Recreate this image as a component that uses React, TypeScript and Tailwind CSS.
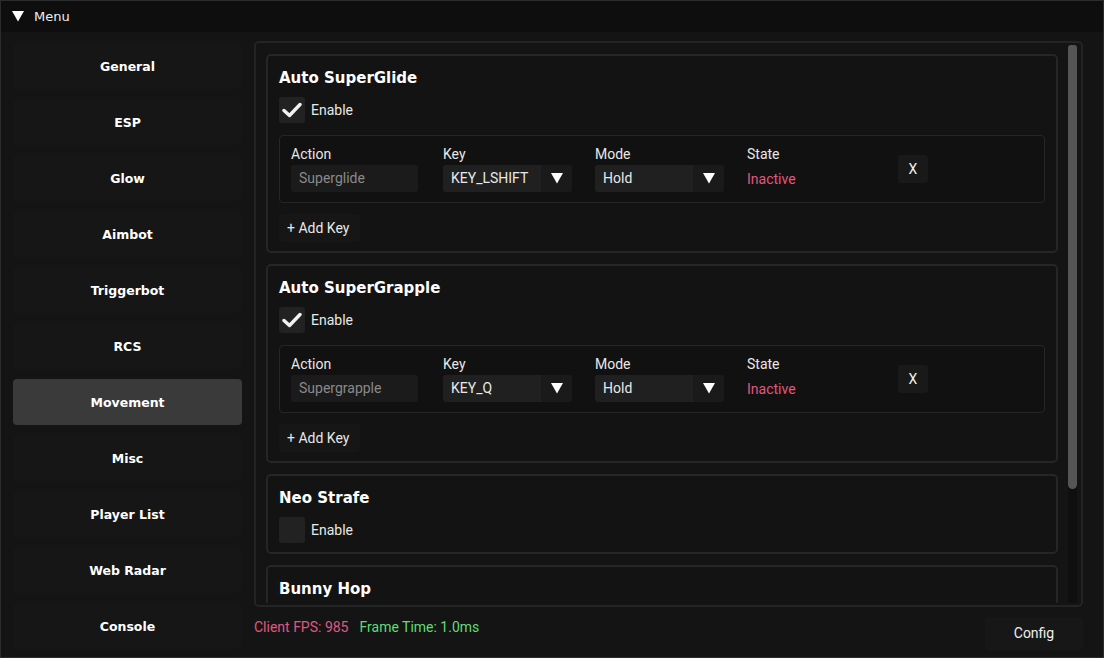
import React from 'react';

const nav = ['General', 'ESP', 'Glow', 'Aimbot', 'Triggerbot', 'RCS', 'Movement', 'Misc', 'Player List', 'Web Radar', 'Console'];

const Tri = ({ className = '' }: { className?: string }) => (
  <svg width="12" height="11" viewBox="0 0 12 11" className={className}>
    <polygon points="0,0 12,0 6,10.5" fill="#fff" />
  </svg>
);

const Check = () => (
  <svg width="20" height="16" viewBox="0 0 20 16">
    <path d="M2 8.5 L7.5 13.5 L18 2.5" stroke="#f2f2f2" strokeWidth="3.4" fill="none" strokeLinecap="round" strokeLinejoin="round" />
  </svg>
);

const Checkbox = ({ checked }: { checked: boolean }) => (
  <div className="flex items-center gap-[6px] h-[26px]">
    <div className="w-[26px] h-[26px] rounded-[3px] bg-[#222222] flex items-center justify-center">
      {checked && <Check />}
    </div>
    <span className="text-[14px] text-[#e8e8e8]">Enable</span>
  </div>
);

const Select = ({ value, width }: { value: string; width: number }) => (
  <div className="flex h-[27px]">
    <div className="bg-[#202020] rounded-l-[3px] flex items-center pl-[8px] text-[14px] text-[#e8e8e8]" style={{ width }}>{value}</div>
    <div className="w-[31px] bg-[#1a1a1a] rounded-r-[3px] flex items-center justify-center"><Tri /></div>
  </div>
);

const KeyRow = ({ action, keyName }: { action: string; keyName: string }) => (
  <div className="border border-[#262626] bg-[#111111] rounded-[4px] h-[68px] pl-[11px] flex items-center">
    <div className="w-[152px] flex flex-col gap-[3px]">
      <span className="text-[14px] leading-[16px] text-[#e8e8e8]">Action</span>
      <div className="w-[127px] h-[27px] bg-[#1b1b1b] rounded-[3px] flex items-center pl-[8px] text-[14px] text-[#8a8a8a]">{action}</div>
    </div>
    <div className="w-[152px] flex flex-col gap-[3px]">
      <span className="text-[14px] leading-[16px] text-[#e8e8e8]">Key</span>
      <Select value={keyName} width={98} />
    </div>
    <div className="w-[152px] flex flex-col gap-[3px]">
      <span className="text-[14px] leading-[16px] text-[#e8e8e8]">Mode</span>
      <Select value="Hold" width={98} />
    </div>
    <div className="w-[151px] flex flex-col gap-[3px]">
      <span className="text-[14px] leading-[16px] text-[#e8e8e8]">State</span>
      <span className="h-[27px] flex items-center pt-[2px] text-[14px] text-[#e0577f]">Inactive</span>
    </div>
    <div className="w-[30px] h-[28px] bg-[#191919] rounded-[3px] flex items-center justify-center text-[14px] text-[#f0f0f0]">X</div>
  </div>
);

const Card = ({ title, children }: { title: string; children?: React.ReactNode }) => (
  <div className="shrink-0 border-2 border-[#262626] rounded-[5px] bg-[#131313] px-[11px] pt-[11px] pb-[9px]">
    <h3 className="font-['DejaVu_Sans',sans-serif] font-bold text-[15px] leading-[20px] pt-[1px] text-white">{title}</h3>
    <div className="mt-[9px]">{children}</div>
  </div>
);

export default function App() {
  return (
    <div className="w-[1104px] h-[658px] bg-[#141414] border border-[#2c2c2c] flex flex-col overflow-hidden font-['Roboto',sans-serif] text-white">
      <div className="h-[31px] bg-[#0e0e0e] flex items-center pl-[11px] gap-[10px] shrink-0">
        <Tri />
        <span className="font-['DejaVu_Sans',sans-serif] text-[13px] text-[#eeeeee]">Menu</span>
      </div>
      <div className="flex flex-1">
        <div className="w-[241px] pl-[12px] pt-[11px] flex flex-col gap-[10px] shrink-0">
          {nav.map(n => (
            <div key={n} className={`h-[46px] w-[229px] rounded-[4px] flex items-center justify-center pt-[2px] font-['DejaVu_Sans',sans-serif] font-bold text-[12.5px] text-white ${n === 'Movement' ? 'bg-[#3a3a3a]' : 'bg-[#161616]'}`}>{n}</div>
          ))}
        </div>
        <div className="ml-[12px] w-[829px] flex flex-col pt-[9px]">
          <div className="h-[566px] border-2 border-[#242424] rounded-[5px] flex pl-[10px] py-[2px] pr-[4px] overflow-hidden">
            <div className="w-[792px] pt-[9px] flex flex-col gap-[11px] overflow-hidden">
              <Card title="Auto SuperGlide">
                <Checkbox checked />
                <div className="mt-[12px]"><KeyRow action="Superglide" keyName="KEY_LSHIFT" /></div>
                <div className="mt-[11px] h-[28px] w-[81px] bg-[#161616] rounded-[3px] flex items-center pl-[8px] text-[14px] text-[#e8e8e8]">+ Add Key</div>
              </Card>
              <Card title="Auto SuperGrapple">
                <Checkbox checked />
                <div className="mt-[12px]"><KeyRow action="Supergrapple" keyName="KEY_Q" /></div>
                <div className="mt-[11px] h-[28px] w-[81px] bg-[#161616] rounded-[3px] flex items-center pl-[8px] text-[14px] text-[#e8e8e8]">+ Add Key</div>
              </Card>
              <Card title="Neo Strafe">
                <Checkbox checked={false} />
              </Card>
              <Card title="Bunny Hop">
                <Checkbox checked={false} />
              </Card>
            </div>
            <div className="ml-[10px] w-[9px] bg-[#0f0f0f] rounded-[2px] self-stretch flex flex-col">
              <div className="h-[444px] bg-[#555555] rounded-t-[3px] rounded-b-[5px]" />
            </div>
          </div>
          <div className="flex items-start justify-between">
            <div className="mt-[10px] flex gap-[11px] text-[14px] leading-[20px]">
              <span className="text-[#e0577f]">Client FPS: 985</span>
              <span className="text-[#5fdc74]">Frame Time: 1.0ms</span>
            </div>
            <div className="mt-[10px] w-[98px] h-[33px] bg-[#171717] rounded-[3px] flex items-center justify-center text-[14px] text-[#f0f0f0]">Config</div>
          </div>
        </div>
      </div>
    </div>
  );
}
